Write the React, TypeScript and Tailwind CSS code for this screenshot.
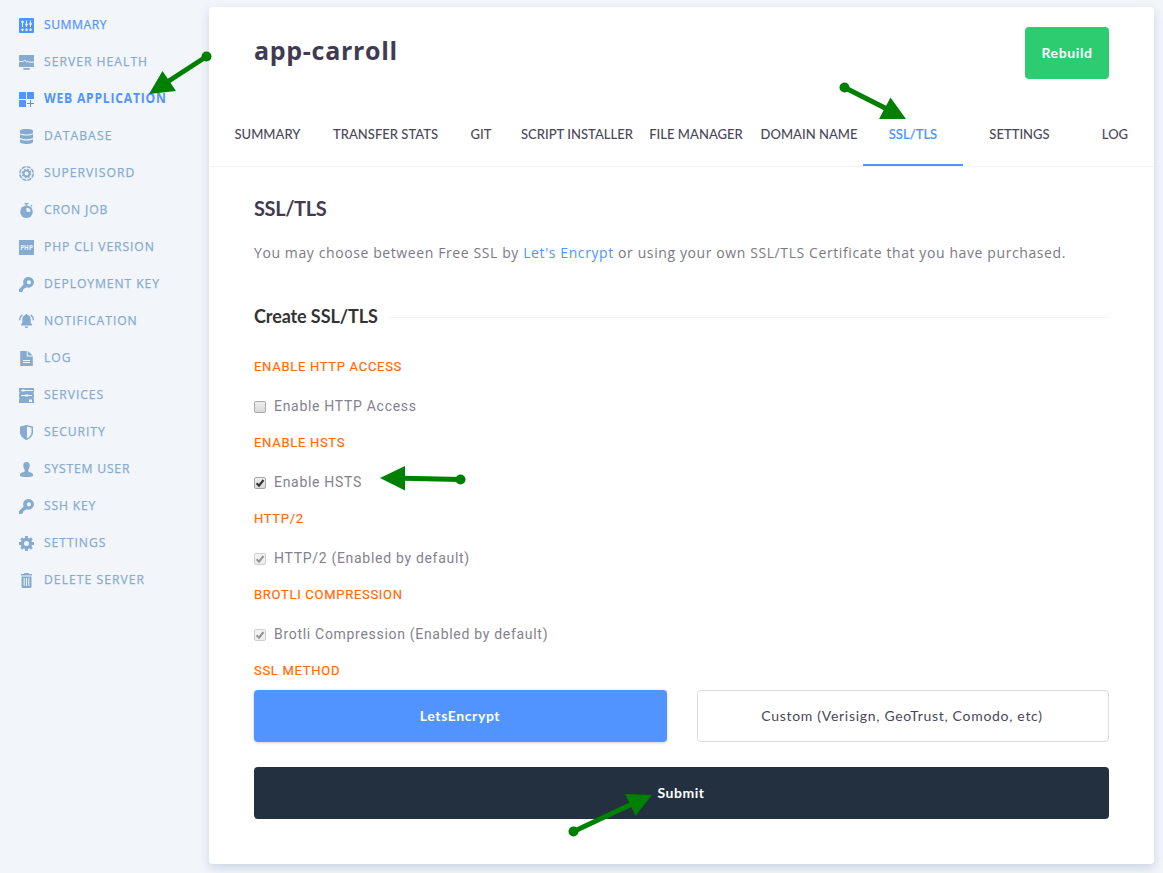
import React from "react";

type Item = { label: string; text: string; icon: React.ReactNode; active?: boolean; tone?: string };
const HOLE = "#f2f5fa";

const key = (
  <path
    fillRule="evenodd"
    fill="currentColor"
    d="M9.6 0a5.3 5.3 0 1 1-2 10.2L6.6 11H5.4v1.3H4v1.4L2.8 15H.6L0 14.3v-2.1l4.6-4.7A5.3 5.3 0 0 1 9.6 0Zm.3 3.2a2.1 2.1 0 1 0 0 4.2 2.1 2.1 0 0 0 0-4.2Z"
  />
);

const items: Item[] = [
  {
    label: "SUMMARY", text: "tracking-[0.6px]", tone: "text-[#5294ff]",
    icon: (
      <>
        <rect width="15" height="15" rx="1" fill="currentColor" />
        <path stroke={HOLE} strokeWidth="1" d="M3.5 2.5v6.500M7.500 2.500v6.500M11.500 2.500v6.500" />
        <path stroke={HOLE} strokeWidth="1.6" d="M2.2 4h2.6M6.2 6.5h2.6M10.2 6h2.6" />
        <g fill={HOLE}><circle cx="3.5" cy="11.7" r="1.2" /><circle cx="7.5" cy="11.7" r="1.2" /><circle cx="11.5" cy="11.7" r="1.2" /></g>
      </>
    ),
  },
  {
    label: "SERVER HEALTH", text: "tracking-[1.12px]",
    icon: (
      <>
        <path fill="currentColor" d="M0 0h15v12H0zM4.3 13h6.4v1.7H4.3z" />
        <path fill="none" stroke={HOLE} strokeWidth="1" d="M0 6.5h4.2l1.6-1.6 1.8 2.4 1.2-1 1.2.8h5" />
      </>
    ),
  },
  {
    label: "WEB APPLICATION", text: "tracking-[0.85px]", tone: "text-[#5294ff]", active: true,
    icon: (
      <>
        <g fill="currentColor"><rect width="7" height="7" rx=".6" /><rect x="8" width="7" height="7" rx=".6" /><rect y="8" width="7" height="7" rx=".6" /></g>
        <path stroke="currentColor" strokeWidth="1" d="M11.5 8v7M8 11.5h7" />
      </>
    ),
  },
  {
    label: "DATABASE", text: "tracking-[1.2px]",
    icon: (
      <path fill="currentColor" d="M1 2C1 .5 4 0 7.5 0S14 .5 14 2v1.7C14 5 11 5.4 7.5 5.4S1 5 1 3.7ZM1 5.3c1.5 1 4 1.2 6.5 1.2s5-.2 6.5-1.2v3.2c0 1.3-3 1.7-6.5 1.7S1 9.8 1 8.5ZM1 10.2c1.5 1 4 1.2 6.5 1.2s5-.2 6.5-1.2v2.6c0 1.5-3 2.2-6.5 2.2S1 14.3 1 12.8Z" />
    ),
  },
  {
    label: "SUPERVISORD", text: "tracking-[1.12px]",
    icon: (
      <>
        <circle cx="7.5" cy="7.5" r="6.7" fill="none" stroke="currentColor" strokeWidth="1.5" strokeDasharray="4.26 1" />
        <circle cx="7.5" cy="7.5" r="3" fill="none" stroke="currentColor" strokeWidth="1.9" />
        <circle cx="7.5" cy="7.5" r="4.3" fill="none" stroke="currentColor" strokeWidth="1.2" strokeDasharray="1.7 1.677" />
      </>
    ),
  },
  {
    label: "CRON JOB", text: "tracking-[0.92px]",
    icon: (
      <>
        <path fill="currentColor" d="M5.5 0h4v1.2H8.3v1.2H6.7V1.2H5.5zM11.3 2.3l1.3-.6.8 1-.8 1.1z" />
        <circle cx="7.5" cy="8.7" r="6.3" fill="currentColor" />
        <path fill={HOLE} d="M7.5 4.7a4 4 0 0 1 4 4h-4z" />
      </>
    ),
  },
  {
    label: "PHP CLI VERSION", text: "tracking-[0.98px]",
    icon: (
      <>
        <rect width="15" height="15" fill="currentColor" />
        <text x="7.5" y="9.7" textAnchor="middle" fontSize="6.3" fontWeight="700" fill={HOLE} fontFamily="Open Sans, sans-serif">PHP</text>
      </>
    ),
  },
  { label: "DEPLOYMENT KEY", text: "tracking-[1.02px]", icon: key },
  {
    label: "NOTIFICATION", text: "tracking-[1.05px]",
    icon: (
      <>
        <path fill="currentColor" d="M7.5 0c.7 0 1 .4 1.1 1 2 .5 3.1 2.2 3.1 4.3v3.5l1.3 1.700v1H2v-1l1.300-1.700V5.300C3.300 3.200 4.400 1.500 6.400 1 6.500.4 6.800 0 7.500 0ZM5.500 12.600h4L8.300 14H6.700z" />
        <path fill="none" stroke="currentColor" strokeWidth="1.4" d="M3.3.8C1.7 1.9.7 3.6.7 6.3M11.7.8c1.600 1.100 2.600 2.800 2.600 5.500" />
      </>
    ),
  },
  {
    label: "LOG", text: "tracking-[1.1px]",
    icon: (
      <>
        <path fill="currentColor" d="M1.2 0h6.6v5.5h6V15H1.2zM8.8 0l5 4.6h-5z" />
        <path stroke={HOLE} strokeWidth="1" d="M4 9.5h7M4 11.5h7" />
      </>
    ),
  },
  {
    label: "SERVICES", text: "tracking-[1.05px]",
    icon: (
      <>
        <path fill="currentColor" d="M0 0h15v4.4H0zM.8 4.4h13.4v1.2H.8zM0 5.6h15v4.2H0zM.8 9.8h13.4v.7H.8zM0 10.5h15V15H0z" />
        <path stroke={HOLE} strokeWidth="1" d="M2 2.5h12M2 7.5h11" />
        <path fill={HOLE} d="M3 1.5h2.8v2H3zM6 6.5h3.2v2H6zM10 11.5h3v2.5h-3z" />
      </>
    ),
  },
  {
    label: "SECURITY", text: "tracking-[1.02px]",
    icon: (
      <>
        <path fill="currentColor" d="M7.5 0 14 1.5V7c0 4-3 6.5-6.5 8C4 13.5 1 11 1 7V1.5Z" />
        <path fill={HOLE} d="M8 1.6 12.5 2.7V7c0 3-2 5-4.5 6.3z" />
      </>
    ),
  },
  {
    label: "SYSTEM USER", text: "tracking-[0.89px]",
    icon: (
      <path fill="currentColor" d="M7.5 0c2 0 3.2 1.2 3.2 3.3 0 1.8-.5 3.4-1.4 4.5v1.5c0 .7 3.2 1.3 4.2 2.3.5.6.7 1.7.4 2.3-.6.7-3.3 1.1-6.4 1.1s-5.8-.4-6.4-1.1c-.3-.6-.1-1.700.4-2.300 1-1 4.200-1.600 4.200-2.300V7.800C4.800 6.700 4.300 5.100 4.300 3.300 4.300 1.200 5.500 0 7.500 0Z" />
    ),
  },
  { label: "SSH KEY", text: "tracking-[0.9px]", icon: key },
  {
    label: "SETTINGS", text: "tracking-[1.04px]",
    icon: (
      <>
        <circle cx="7.5" cy="7.5" r="4.1" fill="none" stroke="currentColor" strokeWidth="3.2" />
        <path stroke="currentColor" strokeWidth="2.8" d="M7.5 0v3M7.5 12v3M0 7.5h3M12 7.5h3M2.2 2.2l2 2M10.8 10.8l2 2M12.8 2.2l-2 2M4.2 10.8l-2 2" />
      </>
    ),
  },
  {
    label: "DELETE SERVER", text: "tracking-[1.15px]",
    icon: (
      <>
        <path fill="currentColor" d="M5.2 0h4.6v1H13v1.5H2V1h3.2zM2.5 3.5h10V14l-.7 1H3.2l-.7-1z" />
        <path stroke={HOLE} strokeWidth="1" d="M5.2 5v8M7.5 5v8M9.8 5v8" />
      </>
    ),
  },
];

const tabs = [
  { label: "SUMMARY", box: "w-[117px]" },
  { label: "TRANSFER STATS", box: "w-[119px]" },
  { label: "GIT", box: "w-[72px]" },
  { label: "SCRIPT INSTALLER", box: "w-[120px]" },
  { label: "FILE MANAGER", box: "w-[118px]" },
  { label: "DOMAIN NAME", box: "w-[108px]" },
  { label: "SSL/TLS", box: "w-[100px]", active: true },
  { label: "SETTINGS", box: "w-[113px]" },
  { label: "LOG", box: "w-[78px]" },
];

const options = [
  { title: "ENABLE HTTP ACCESS", label: "Enable HTTP Access", checked: false, disabled: false },
  { title: "ENABLE HSTS", label: "Enable HSTS", checked: true, disabled: false },
  { title: "HTTP/2", label: "HTTP/2 (Enabled by default)", checked: true, disabled: true },
  { title: "BROTLI COMPRESSION", label: "Brotli Compression (Enabled by default)", checked: true, disabled: true },
];

function FieldTitle({ children }: { children: React.ReactNode }) {
  return (
    <h4 className="text-[13px] leading-5 tracking-[0.71px] text-[#ff6a0a] [-webkit-text-stroke:0.2px_currentColor]">{children}</h4>
  );
}

function Checkbox({ checked, disabled }: { checked: boolean; disabled: boolean }) {
  return (
    <span
      className={`mt-[5px] flex h-3 w-3 shrink-0 items-center justify-center rounded-[2px] border bg-linear-to-b ${
        disabled ? "border-[#cfcfcf] from-[#f4f4f4] to-[#ececec]" : "border-[#a8a8a8] from-[#eeeeee] to-[#d9d9d9]"
      }`}
    >
      {checked && (
        <svg viewBox="0 0 10 10" className={`h-[10px] w-[10px] ${disabled ? "text-[#969696]" : "text-[#333333]"}`}>
          <path d="M1.6 5.3 4 7.7 8.5 2" fill="none" stroke="currentColor" strokeWidth="2.1" />
        </svg>
      )}
    </span>
  );
}

const arrows = [
  { x: 206.5, y: 56.5, tx: 168, ty: 81.5, head: "149,94 162.5,71 176,91" },
  { x: 844.5, y: 87.5, tx: 886, ty: 108.5, head: "906,119 890.5,97.5 879,119" },
  { x: 460.5, y: 479.5, tx: 404, ty: 478.3, head: "380,478 405,466 405,490.5" },
  { x: 573.5, y: 831.5, tx: 631, ty: 804.5, head: "652,795 625,794 635.5,816" },
];

export default function App() {
  return (
    <div className="relative flex h-[873px] w-[1163px] overflow-hidden bg-[#f2f5fa] font-[Lato,sans-serif]">
      <nav className="flex w-[209px] shrink-0 flex-col pt-[6px] pl-[19px]">
        {items.map((it) => (
          <a key={it.label} className={`flex h-[37px] items-center ${it.tone ?? "text-[#85abd1]"}`}>
            <svg viewBox="0 0 15 15" className="mt-[2px] h-[15px] w-[15px] shrink-0">{it.icon}</svg>
            <span
              className={`mb-[2px] ml-[9.5px] origin-left scale-x-90 font-['Open_Sans',sans-serif] text-[13.5px] leading-5 whitespace-nowrap ${
                it.active ? "font-bold" : "font-medium [-webkit-text-stroke:0.25px_currentColor]"
              } ${it.text}`}
            >
              {it.label}
            </span>
          </a>
        ))}
      </nav>
      <main className="mt-[7px] h-[857px] w-[945px] rounded bg-white shadow-[0_4px_10px_rgba(90,125,160,0.25)]">
        <header className="flex h-[95px] items-start justify-between pt-5 pr-[45px] pl-[45px]">
          <h1 className="pt-[6px] font-['Open_Sans',sans-serif] text-[25px] leading-[34px] font-bold tracking-[0.7px] text-[#3f3b50]">app-carroll</h1>
          <button className="h-[52px] w-[84px] rounded bg-[#2ecc71] text-sm font-bold tracking-[0.6px] text-white">Rebuild</button>
        </header>
        <div className="flex h-[65px] border-b border-[#eef2f9]">
          {tabs.map((t) => (
            <a
              key={t.label}
              className={`flex h-16 items-center justify-center border-b-2 pt-1 text-[13px] font-medium tracking-[0.03px] whitespace-nowrap ${t.box} ${
                t.active ? "border-[#5294ff] text-[#5294ff] [-webkit-text-stroke:0.2px_currentColor]" : "border-transparent text-[#4a475a]"
              }`}
            >
              {t.label}
            </a>
          ))}
        </div>
        <section className="px-[45px]">
          <h2 className="pt-[28px] text-[20px] leading-[26px] font-bold tracking-[-0.4px] text-[#3f3b50]">SSL/TLS</h2>
          <p className="mt-[22px] font-['Open_Sans',sans-serif] text-sm leading-5 tracking-[0.599px] whitespace-nowrap text-[#7b7985]">
            You may choose between Free SSL by <a className="text-[#5294ff]">Let's Encrypt</a> or using your own SSL/TLS Certificate that you have purchased.
          </p>
          <div className="mt-[41px] flex items-center gap-[10px]">
            <h3 className="text-[18px] leading-6 font-bold tracking-[-0.1px] text-[#333333]">Create SSL/TLS</h3>
            <span className="mt-[2px] h-px flex-1 bg-[#f3f3f3]" />
          </div>
          <div className="mt-[29px] font-[Roboto,sans-serif]">
            {options.map((o) => (
              <div key={o.title} className="h-[76px]">
                <FieldTitle>{o.title}</FieldTitle>
                <label className="mt-[19px] flex gap-2 text-sm leading-[21px] tracking-[0.7px] text-[#84828e]">
                  <Checkbox checked={o.checked} disabled={o.disabled} />
                  {o.label}
                </label>
              </div>
            ))}
            <FieldTitle>SSL METHOD</FieldTitle>
          </div>
          <div className="mt-[9px] grid grid-cols-[413px_412px] gap-[30px]">
            <button className="h-[52px] rounded bg-[#5294ff] pr-px text-sm font-bold tracking-[0.6px] text-white shadow-[0_1px_3px_rgba(80,100,160,0.3)]">LetsEncrypt</button>
            <button className="h-[52px] rounded border border-[#dddddd] pr-[2px] text-sm tracking-[0.7px] text-[#4a475a]">Custom (Verisign, GeoTrust, Comodo, etc)</button>
          </div>
          <button className="mt-[25px] h-[52px] w-full rounded bg-[#22303f] pr-px text-sm font-bold tracking-[0.5px] text-white">Submit</button>
        </section>
      </main>
      <svg viewBox="0 0 1163 873" className="pointer-events-none absolute inset-0 h-[873px] w-[1163px] text-[#008000]">
        {arrows.map((a) => (
          <g key={a.head} fill="currentColor">
            <circle cx={a.x} cy={a.y} r="5" />
            <line x1={a.x} y1={a.y} x2={a.tx} y2={a.ty} stroke="currentColor" strokeWidth="5" />
            <polygon points={a.head} />
          </g>
        ))}
      </svg>
    </div>
  );
}
